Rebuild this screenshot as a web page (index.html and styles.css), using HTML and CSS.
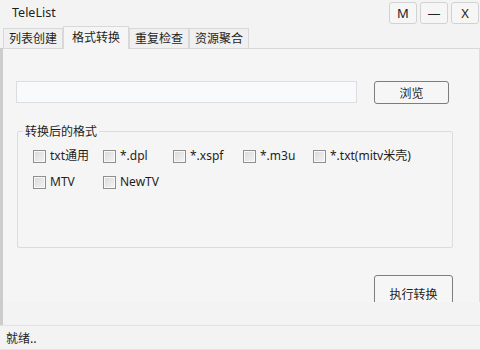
FILE: index.html
```html
<!DOCTYPE html>
<html lang="zh">
<head>
<meta charset="utf-8">
<title>TeleList</title>
<link rel="stylesheet" href="styles.css">
</head>
<body>
<div class="window">
  <div class="titlebar">
    <span class="title">TeleList</span>
    <div class="winbtns">
      <button class="winbtn">M</button>
      <button class="winbtn">—</button>
      <button class="winbtn">X</button>
    </div>
  </div>
  <div class="tabbar">
    <div class="tab">列表创建</div>
    <div class="tab active">格式转换</div>
    <div class="tab">重复检查</div>
    <div class="tab">资源聚合</div>
  </div>
  <div class="main">
    <div class="pane">
      <div class="filerow">
        <div class="input"></div>
        <button class="btn browse">浏览</button>
      </div>
      <fieldset class="group">
        <legend class="legend">转换后的格式</legend>
        <div class="checks">
          <label class="check"><span class="box"></span><span>txt通用</span></label>
          <label class="check"><span class="box"></span><span>*.dpl</span></label>
          <label class="check"><span class="box"></span><span>*.xspf</span></label>
          <label class="check"><span class="box"></span><span>*.m3u</span></label>
          <label class="check"><span class="box"></span><span>*.txt(mitv米壳)</span></label>
          <label class="check"><span class="box"></span><span>MTV</span></label>
          <label class="check"><span class="box"></span><span>NewTV</span></label>
        </div>
      </fieldset>
      <div class="actions">
        <button class="btn run">执行转换</button>
      </div>
    </div>
  </div>
  <div class="status">就绪..</div>
</div>
</body>
</html>
```
FILE: styles.css
```css
* { box-sizing: border-box; }
html, body { margin: 0; padding: 0; }
body {
  width: 480px;
  height: 350px;
  overflow: hidden;
  background: #f3f3f3;
  font-family: "Noto Sans", "Noto Sans CJK SC", sans-serif;
  font-size: 12px;
  color: #1e1e1e;
}
.window {
  display: flex;
  flex-direction: column;
  height: 350px;
}
.titlebar {
  height: 26px;
  display: flex;
  align-items: flex-start;
  justify-content: space-between;
}
.title {
  margin: 5px 0 0 12px;
  font-size: 12.5px;
  line-height: 16px;
}
.winbtns {
  display: flex;
  gap: 3px;
  margin: 2px 1px 0 0;
}
.winbtn {
  width: 28px;
  height: 22px;
  padding: 0;
  border: 1px solid #d2d2d2;
  border-radius: 3px;
  background: #f6f6f6;
  font-family: "Noto Sans", sans-serif;
  font-size: 13px;
  color: #222;
  line-height: 20px;
}
.tabbar {
  height: 22px;
  display: flex;
  align-items: flex-end;
  padding-left: 3px;
}
.tab {
  height: 20px;
  padding: 0 5px;
  border: 1px solid #d8d8d8;
  border-bottom: none;
  background: #f0f0f0;
  line-height: 19px;
  font-size: 12px;
}
.tab.active {
  position: relative;
  z-index: 1;
  height: 23px;
  margin-bottom: -1px;
  padding: 0 8px;
  background: #f5f5f5;
  line-height: 21px;
}
.main {
  flex: 1;
  display: flex;
  flex-direction: column;
  border-left: 3px solid #cccccc;
}
.pane {
  height: 254px;
  overflow: hidden;
  background: #f5f5f5;
  border-top: 1px solid #d8d8d8;
  border-right: 1px solid #dddddd;
  padding: 32px 0 0 13px;
}
.filerow {
  display: flex;
  align-items: flex-start;
  gap: 17px;
}
.input {
  width: 341px;
  height: 22px;
  background: #f9fafc;
  border: 1px solid #dcdde0;
}
.btn {
  padding: 0;
  background: #f6f6f6;
  border: 1px solid #7d7d7d;
  border-radius: 3px;
  font-family: "Noto Sans CJK SC", sans-serif;
  font-size: 12px;
  line-height: 14px;
  color: #1e1e1e;
}
.browse {
  width: 75px;
  height: 23px;
}
.group {
  margin: 19px 0 0 1px;
  width: 436px;
  height: 125px;
  padding: 0;
  border: 1px solid #dcdcdc;
  border-radius: 2px;
}
.legend {
  margin-left: 5px;
  padding: 0 2px;
  font-family: "Noto Sans CJK SC", sans-serif;
  font-size: 12px;
  line-height: 16px;
}
.checks {
  display: grid;
  grid-template-columns: repeat(5, 70px);
  grid-auto-rows: 20px;
  row-gap: 6px;
  padding: 7px 0 0 15px;
}
.check {
  display: flex;
  align-items: center;
  gap: 4px;
  white-space: nowrap;
  line-height: 20px;
}
.box {
  flex: none;
  width: 13px;
  height: 13px;
  border: 1px solid #8f8f8f;
  background: linear-gradient(135deg, #d9d9d9, #f4f4f4);
  box-shadow: inset 0 0 0 1px #f8f8f8;
}
.actions {
  display: flex;
  justify-content: flex-end;
  width: 437px;
  margin-top: 27px;
}
.run {
  width: 79px;
  height: 38px;
}
.status {
  height: 25px;
  border-top: 1px solid #e2e2e2;
  border-bottom: 1px solid #e2e2e2;
  padding-left: 6px;
  line-height: 23px;
  font-family: "Noto Sans CJK SC", sans-serif;
}
```
